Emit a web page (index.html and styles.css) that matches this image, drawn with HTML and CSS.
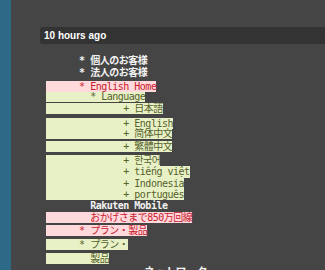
FILE: index.html
```html
<!DOCTYPE html>
<html lang="ja">
<head>
<meta charset="utf-8">
<title>Diff</title>
<link rel="stylesheet" href="styles.css">
</head>
<body>
<div class="app">
  <div class="rail"></div>
  <main class="main">
    <div class="stamp">10 hours ago</div>
    <div class="diff">
      <div class="ln same tall">      * 個人のお客様</div>
      <div class="ln same tall">      * 法人のお客様</div>
      <div class="ln del gap2">      * English Home</div>
      <div class="ln ins short">        * Language</div>
      <div class="ln ins gap1">              + 日本語</div>
      <div class="ln ins gap4">              + English</div>
      <div class="ln ins short">              + 简体中文</div>
      <div class="ln ins gap2">              + 繁體中文</div>
      <div class="ln ins gap3">              + 한국어</div>
      <div class="ln ins tall">              + tiếng việt</div>
      <div class="ln ins">              + Indonesia</div>
      <div class="ln ins">              + português</div>
      <div class="ln same">        Rakuten Mobile</div>
      <div class="ln del gap1">        おかげさまで850万回線</div>
      <div class="ln del gap2">      * プラン・製品</div>
      <div class="ln ins gap3">      * プラン・</div>
      <div class="ln ins gap3">        製品</div>
      <div class="ln same head gap3">                ネットワーク</div>
    </div>
  </main>
</div>
</body>
</html>
```
FILE: styles.css
```css
html, body {
  margin: 0;
  padding: 0;
  background: #454545;
  height: 100%;
  overflow: hidden;
}

.app {
  display: flex;
  height: 270px;
}

.rail {
  width: 11px;
  flex: none;
  background: #2d6a88;
}

.main {
  flex: 1;
  padding: 27px 0 0 29px;
}

.stamp {
  height: 17px;
  line-height: 17px;
  background: #333333;
  border-radius: 3px 0 0 3px;
  padding-left: 4px;
  font-family: "Liberation Sans", Arial, sans-serif;
  font-weight: bold;
  font-size: 10px;
  color: #ffffff;
}

.diff {
  margin: 11px 0 0 6px;
  font-family: "DejaVu Sans Mono", "Noto Sans CJK JP", monospace;
  font-size: 10px;
  letter-spacing: -0.5px;
}

.ln {
  width: fit-content;
  white-space: pre;
  height: 11px;
  line-height: 11px;
}

.ln.tall { height: 12px; line-height: 12px; }
.ln.short { height: 10px; line-height: 10px; }

.same {
  color: #f2f2f2;
  font-weight: bold;
}

.del {
  background: #ffd9dc;
  color: #c8202e;
}

.ins {
  background: #e8f1c6;
  color: #56622c;
}

.gap1 { margin-top: 1px; }
.gap2 { margin-top: 2px; }
.gap3 { margin-top: 3px; }
.gap4 { margin-top: 4px; }

.head {
  font-size: 11px;
}
```
